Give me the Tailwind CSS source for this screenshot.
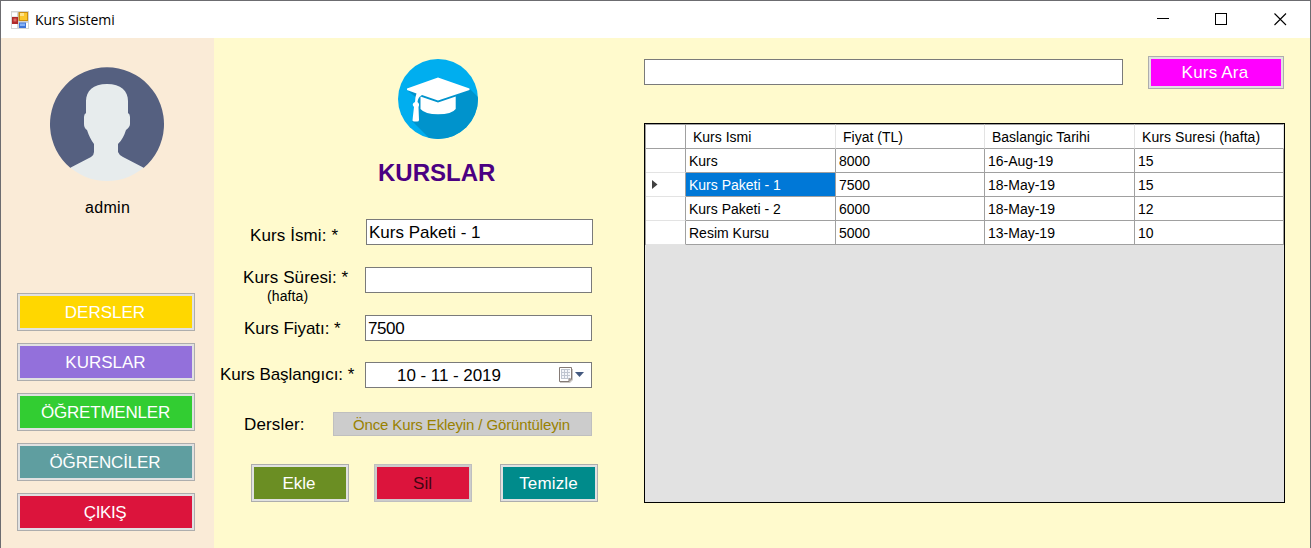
<!DOCTYPE html>
<html lang="tr">
<head>
<meta charset="utf-8">
<title>Kurs Sistemi</title>
<script src="https://cdn.jsdelivr.net/npm/@tailwindcss/browser@4"></script>
</head>
<body class="w-[1311px] h-[548px] overflow-hidden font-['Liberation_Sans',sans-serif] text-[17px] leading-5 text-black whitespace-nowrap">
<div class="w-full h-full border-t border-x border-[#6c6c70] bg-white flex flex-col">
  <header class="h-[37px] shrink-0 flex items-center pl-[10px]">
    <svg class="w-[18px] h-[18px]" viewBox="0 0 18 18">
      <rect width="18" height="18" fill="#d4d4d4"/>
      <path d="M1 1.500h5v4H1zM1 13h5v4H1zM15 12h2v5h-2z" fill="#fff"/>
      <rect x="1" y="6" width="6" height="7" fill="#b02a2a"/><rect x="2.500" y="7.500" width="3" height="3" fill="#dd6a62"/>
      <rect x="7.500" y="1" width="9.500" height="9" fill="#c98d10"/><rect x="9" y="2" width="7" height="7" fill="#fbc62c"/><rect x="9" y="2" width="4" height="3" fill="#ffe38a"/>
      <rect x="8" y="11.500" width="7" height="5.500" fill="#3d74d8"/><rect x="9" y="12.500" width="5" height="2.500" fill="#86b1f5"/>
    </svg>
    <span class="ml-[6px] font-['Open_Sans',sans-serif] text-[14px] tracking-[-0.06px]">Kurs Sistemi</span>
    <svg class="ml-auto mr-[23px] w-[130px] h-[13px]" viewBox="0 0 130 13" fill="none" stroke="#000" shape-rendering="crispEdges">
      <path d="M0 5.500h12"/><rect x="58.500" y="0.500" width="11" height="11"/><path d="M117.500 0.500L129 12M129 0.500L117.500 12" shape-rendering="auto" stroke-width="1.1"/>
    </svg>
  </header>
  <div class="flex-1 flex">
    <aside class="w-[213px] bg-[#faebd7] flex flex-col pt-[29px]">
      <svg class="ml-[49px] w-[114px] h-[114px]" viewBox="0 0 114 114">
        <defs><clipPath id="face"><circle cx="57" cy="57" r="57"/></clipPath></defs>
        <path fill="#556080" d="M20.500 101A57 57 0 1 1 93.500 101Z"/>
        <path clip-path="url(#face)" fill="#e7eced" d="M57 17C43 17 36 24 36 34V46Q34 47 34 50V57Q34 61 37 63C39 69 41 73 44 77V85Q44 88 41 90L14 104V116H100V104L73 90Q69 88 68 85V77C72 73 74 69 76 63Q80 60 80 57V50Q80 47 78 46V34C78 24 71 17 57 17Z"/>
      </svg>
      <div class="mt-[17px] pl-[84px] text-[16px] tracking-[0.3px]">admin</div>
      <nav class="mt-[75px] ml-[16px] w-[178px] flex flex-col gap-3 text-white text-center leading-[33px]">
        <div class="h-[38px] border border-[#adadad] bg-[#e1e1e1] p-[2px]"><div class="h-full bg-[#ffd700] pr-[2px]">DERSLER</div></div>
        <div class="h-[38px] border border-[#adadad] bg-[#e1e1e1] p-[2px]"><div class="h-full bg-[#9370db] pr-[1px]">KURSLAR</div></div>
        <div class="h-[38px] border border-[#adadad] bg-[#e1e1e1] p-[2px]"><div class="h-full bg-[#32cd32] pr-[1px] tracking-[-0.2px]">ÖĞRETMENLER</div></div>
        <div class="h-[38px] border border-[#adadad] bg-[#e1e1e1] p-[2px]"><div class="h-full bg-[#5f9ea0] pr-[2px] tracking-[-0.15px]">ÖĞRENCİLER</div></div>
        <div class="h-[38px] border border-[#adadad] bg-[#e1e1e1] p-[2px]"><div class="h-full bg-[#dc143c] pr-[2px] tracking-[-0.4px]">ÇIKIŞ</div></div>
      </nav>
    </aside>
    <main class="flex-1 bg-[#fffacd] flex">
      <section class="w-[430px] flex flex-col">
        <svg class="mt-[21px] ml-[184px] w-[80px] h-[80px] shrink-0" viewBox="0 0 80 80">
          <defs><clipPath id="badge"><circle cx="40" cy="40" r="40"/></clipPath></defs>
          <circle cx="40" cy="40" r="40" fill="#00aeef"/>
          <path clip-path="url(#badge)" fill="#0093cc" d="M71 29L90 48V90H42L14 62L20 40L10 32L40 35Z"/>
          <path fill="#fff" d="M40 18.500L71.500 29.500V31L40 41.500L24 36Q20 38 19.500 43Q22 45 20.500 48L21 61Q21 63 18 62.500Q14 62.500 14.500 61L16 48Q13 45 17 43Q17 38 18.500 34.500L9 31V29.500Z"/>
          <path fill="#fff" d="M22.500 37.500L40 43.500L57.700 37.500V50Q54 55.300 40 55.300Q27 55.300 22.500 50Z"/>
        </svg>
        <h1 class="mt-[20px] h-[28px] leading-7 pl-[164px] text-[24px] font-bold text-[#4b0082]">KURSLAR</h1>
        <div class="mt-[32px] h-[26px] flex">
          <div class="w-[152px] pl-[36px] pt-[7px] tracking-[0.1px]">Kurs İsmi: *</div>
          <div class="w-[227px] border border-[#7a7a7a] bg-white pl-[2px] leading-[25px]">Kurs Paketi - 1</div>
        </div>
        <div class="mt-[22px] h-[26px] flex">
          <div class="w-[151px] pl-[29px] pt-[1px] tracking-[0.1px]">Kurs Süresi: *<div class="pl-[24px] text-[14px] leading-[17px]">(hafta)</div></div>
          <div class="w-[227px] border border-[#7a7a7a] bg-white"></div>
        </div>
        <div class="mt-[22px] h-[26px] flex">
          <div class="w-[151px] pl-[30px] pt-[4px] tracking-[-0.05px]">Kurs Fiyatı: *</div>
          <div class="w-[227px] border border-[#7a7a7a] bg-white pl-[2px] leading-[25px] tracking-[-0.4px]">7500</div>
        </div>
        <div class="mt-[21px] h-[26px] flex">
          <div class="w-[151px] pl-[6px] pt-[3px] tracking-[-0.05px]">Kurs Başlangıcı: *</div>
          <div class="w-[227px] border border-[#7a7a7a] bg-white pl-[31px] leading-[25px] tracking-[-0.05px] flex">10 - 11 - 2019
            <svg class="ml-auto mr-[6px] mt-[4px] w-[27px] h-[17px]" viewBox="0 0 27 17">
              <path d="M2 2h13v11l-3 3H2z" fill="#ccc8c5"/>
              <path d="M1.500 0.500h12v11.500l-2.500 2.500H1.500z" fill="#fff" stroke="#857b76"/>
              <path d="M3 2h9v10H3z" fill="#bfc5d0"/><path d="M4 3h2v2H4zM7 3h2v2H7zM10 3h2v2h-2zM4 6h2v2H4zM7 6h2v2H7zM10 6h2v2h-2zM4 9h2v2H4zM7 9h2v2H7zM10 9h2v2h-2z" fill="#f3f5f9"/>
              <path d="M11 14.500V12h2.500" fill="none" stroke="#857b76"/>
              <path d="M17 5h9L21.500 10z" fill="#44597f"/>
            </svg>
          </div>
        </div>
        <div class="mt-[24px] h-[24px] flex">
          <div class="w-[119px] pl-[30px] pt-[3px] tracking-[0.15px]">Dersler:</div>
          <div class="w-[259px] border border-[#bfbfbf] bg-[#ccc] pr-[2px] text-center text-[15px] tracking-[-0.12px] leading-[24px] text-[#998100]">Önce Kurs Ekleyin / Görüntüleyin</div>
        </div>
        <div class="mt-[28px] ml-[37px] h-[38px] flex text-center leading-[33px]">
          <div class="w-[98px] border border-[#adadad] bg-[#e1e1e1] p-[2px]"><div class="h-full bg-[#6b8e23] pr-[2px] text-white">Ekle</div></div>
          <div class="ml-[25px] w-[98px] border border-[#bfbfbf] bg-[#ccc] p-[2px]"><div class="h-full bg-[#dc143c] pr-[1px] text-[#420612]">Sil</div></div>
          <div class="ml-[28px] w-[98px] border border-[#adadad] bg-[#e1e1e1] p-[2px]"><div class="h-full bg-[#008b8b] pr-[1px] tracking-[0.15px] text-white">Temizle</div></div>
        </div>
      </section>
      <section class="w-[641px] flex flex-col pt-[18px]">
        <div class="flex w-[640px] h-[33px] justify-between">
          <div class="mt-[3px] w-[479px] h-[26px] border border-[#7a7a7a] bg-white"></div>
          <div class="w-[136px] border border-[#adadad] bg-[#e1e1e1] p-[2px]"><div class="h-full bg-[#ff00ff] pr-[2px] text-white text-center tracking-[0.2px] leading-[28px]">Kurs Ara</div></div>
        </div>
        <div class="mt-[34px] h-[380px] border border-black bg-[#e2e2e2] text-[14px] leading-[25px]">
          <div class="w-[639px] grid grid-cols-[40px_150px_149px_150px_149px] grid-rows-[25px_24px_24px_24px_24px] border-l border-[#a0a0a0] *:border-[#a0a0a0] *:border-b *:border-r *:bg-white *:pl-[3px] bg-white">
            <div class="border-t"></div>
            <div class="border-t border-r-[#e3e3e3]! pl-[7px]!">Kurs Ismi</div>
            <div class="border-t border-r-[#e3e3e3]! pl-[7px]!">Fiyat (TL)</div>
            <div class="border-t border-r-[#e3e3e3]! pl-[7px]!">Baslangic Tarihi</div>
            <div class="border-t border-r-[#e3e3e3]! pl-[7px]! tracking-[0.08px]">Kurs Suresi (hafta)</div>
            <div class="border-b-[#e3e3e3]!"></div><div>Kurs</div><div>8000</div><div>16-Aug-19</div><div>15</div>
            <div class="border-b-[#e3e3e3]! flex items-center pl-[6px]!"><svg class="w-[6px] h-[9px]" viewBox="0 0 6 9"><path d="M0 0L5.500 4.500L0 9z" fill="#404040"/></svg></div><div class="bg-[#0078d7]! text-white">Kurs Paketi - 1</div><div>7500</div><div>18-May-19</div><div>15</div>
            <div class="border-b-[#e3e3e3]!"></div><div>Kurs Paketi - 2</div><div>6000</div><div>18-May-19</div><div>12</div>
            <div class="border-b-[#e3e3e3]!"></div><div>Resim Kursu</div><div>5000</div><div>13-May-19</div><div>10</div>
          </div>
        </div>
      </section>
    </main>
  </div>
</div>
</body>
</html>
